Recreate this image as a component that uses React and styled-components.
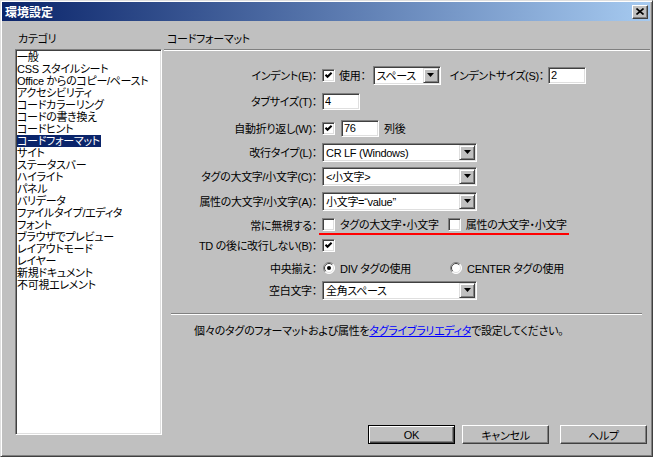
import React from "react";
import styled, { createGlobalStyle } from "styled-components";

const GlobalStyle = createGlobalStyle`
  html, body {
    margin: 0;
    padding: 0;
    background: #c0c0c0;
  }
  body {
    font-family: "Liberation Sans", "Noto Sans CJK JP", sans-serif;
    font-size: 11px;
    letter-spacing: -0.3px;
    font-feature-settings: "palt" 1;
    color: #000;
  }
`;

const categories = [
  "一般",
  "CSS スタイルシート",
  "Office からのコピー/ペースト",
  "アクセシビリティ",
  "コードカラーリング",
  "コードの書き換え",
  "コードヒント",
  "コードフォーマット",
  "サイト",
  "ステータスバー",
  "ハイライト",
  "パネル",
  "バリデータ",
  "ファイルタイプ/エディタ",
  "フォント",
  "ブラウザでプレビュー",
  "レイアウトモード",
  "レイヤー",
  "新規ドキュメント",
  "不可視エレメント",
];

export default function App() {
  return (
    <>
      <GlobalStyle />
      <Window>
        <TitleBar>
          <Title>環境設定</Title>
          <CloseButton>
            <svg width="8" height="7" viewBox="0 0 8 7">
              <path d="M0.5 0.5 L7.5 6.5 M7.5 0.5 L0.5 6.5" stroke="#000" strokeWidth="1.6" />
            </svg>
          </CloseButton>
        </TitleBar>
        <Body>
          <LeftCol>
            <Caption>カテゴリ</Caption>
            <ListBox>
              {categories.map((c) => (
                <ListItem key={c} $selected={c === "コードフォーマット"}>
                  {c}
                </ListItem>
              ))}
            </ListBox>
          </LeftCol>
          <RightCol>
            <Caption>コードフォーマット</Caption>
            <Rule />
            <Form>
              <Row $mt={14}>
                <Label>インデント(E)：</Label>
                <Controls>
                  <Checkbox checked />
                  <Text $ml={4}>使用：</Text>
                  <Select $w={68} $ml={7} value="スペース" />
                  <Text $ml={9}>インデントサイズ(S)：</Text>
                  <Field $w={38} $ml={4} value="2" />
                </Controls>
              </Row>
              <Row $mt={6}>
                <Label>タブサイズ(T)：</Label>
                <Controls>
                  <Field $w={38} value="4" />
                </Controls>
              </Row>
              <Row $mt={7}>
                <Label>自動折り返し(W)：</Label>
                <Controls>
                  <Checkbox checked />
                  <Field $w={38} $ml={6} value="76" />
                  <Text $ml={5}>列後</Text>
                </Controls>
              </Row>
              <Row $mt={4}>
                <Label>改行タイプ(L)：</Label>
                <Controls>
                  <Select $w={155} value="CR LF (Windows)" />
                </Controls>
              </Row>
              <Row $mt={4}>
                <Label>タグの大文字/小文字(C)：</Label>
                <Controls>
                  <Select $w={155} value="<小文字>" />
                </Controls>
              </Row>
              <Row $mt={5}>
                <Label>属性の大文字/小文字(A)：</Label>
                <Controls>
                  <Select $w={155} value={"小文字=\u201Cvalue\u201D"} />
                </Controls>
              </Row>
              <Row $mt={4}>
                <Label>常に無視する：</Label>
                <Controls>
                  <Marked>
                    <Checkbox />
                    <Text $ml={5}>タグの大文字・小文字</Text>
                    <Checkbox $ml={9} />
                    <Text $ml={5}>属性の大文字・小文字</Text>
                  </Marked>
                </Controls>
              </Row>
              <Row $mt={0}>
                <Label>TD の後に改行しない(B)：</Label>
                <Controls>
                  <Checkbox checked />
                </Controls>
              </Row>
              <Row $mt={3}>
                <Label>中央揃え：</Label>
                <Controls>
                  <Option $w={128}>
                    <Radio checked $ml={1} />
                    <Text $ml={5}>DIV タグの使用</Text>
                  </Option>
                  <Option>
                    <Radio />
                    <Text $ml={5}>CENTER タグの使用</Text>
                  </Option>
                </Controls>
              </Row>
              <Row $mt={2}>
                <Label>空白文字：</Label>
                <Controls>
                  <Select $w={155} value="全角スペース" />
                </Controls>
              </Row>
            </Form>
            <Separator />
            <Note>
              個々のタグのフォーマットおよび属性を<Link href="#">タグライブラリエディタ</Link>で設定してください。
            </Note>
            <ButtonRow>
              <Button $default>OK</Button>
              <Button $ml={7}>キャンセル</Button>
              <Button $ml={11}>ヘルプ</Button>
            </ButtonRow>
          </RightCol>
        </Body>
      </Window>
    </>
  );
}

function Checkbox({ checked, $ml }) {
  return (
    <CheckBox $ml={$ml}>
      {checked && (
        <svg width="9" height="9" viewBox="0 0 9 9">
          <path d="M1.5 3.8 L3.5 5.8 L7.6 1.7" fill="none" stroke="#000" strokeWidth="2" />
        </svg>
      )}
    </CheckBox>
  );
}

function Radio({ checked, $ml }) {
  return (
    <RadioBox $ml={$ml}>
      <svg width="12" height="12" viewBox="0 0 12 12">
        <circle cx="6" cy="6" r="5.5" fill="#fff" />
        <path d="M2.1 9.9 A5.5 5.5 0 0 1 9.9 2.1" fill="none" stroke="#808080" />
        <path d="M9.9 2.1 A5.5 5.5 0 0 1 2.1 9.9" fill="none" stroke="#fff" />
        <path d="M2.8 9.2 A4.5 4.5 0 0 1 9.2 2.8" fill="none" stroke="#404040" />
        <path d="M9.2 2.8 A4.5 4.5 0 0 1 2.8 9.2" fill="none" stroke="#dfdfdf" />
        {checked && <circle cx="6" cy="6" r="2" fill="#000" />}
      </svg>
    </RadioBox>
  );
}

function Select({ value, $w, $ml }) {
  return (
    <SelectBox $w={$w} $ml={$ml}>
      <SelectValue>{value}</SelectValue>
      <DropButton>
        <svg width="7" height="4" viewBox="0 0 7 4">
          <polygon points="0,0 7,0 3.5,4" fill="#000" />
        </svg>
      </DropButton>
    </SelectBox>
  );
}

function Field({ value, $w, $ml }) {
  return <FieldInput $w={$w} $ml={$ml} readOnly defaultValue={value} />;
}

const sunken = `
  border: 1px solid;
  border-color: #808080 #fff #fff #808080;
  box-shadow: inset 1px 1px #404040, inset -1px -1px #dfdfdf;
`;

const raised = `
  border: 1px solid;
  border-color: #fff #404040 #404040 #fff;
  box-shadow: inset -1px -1px #808080;
`;

const Window = styled.div`
  height: 457px;
  box-sizing: border-box;
  display: flex;
  flex-direction: column;
  background: #c0c0c0;
  border: 1px solid;
  border-color: #dfdfdf #404040 #404040 #dfdfdf;
  box-shadow: inset 1px 1px #fff, inset -1px -1px #808080;
  padding: 1px 2px 2px 1px;
`;

const TitleBar = styled.div`
  height: 19px;
  display: flex;
  align-items: center;
  justify-content: space-between;
  padding: 0 2px 0 3px;
  background: linear-gradient(to right, #0a246a, #a6caf0);
`;

const Title = styled.span`
  color: #fff;
  font-weight: bold;
  font-size: 12px;
  letter-spacing: 0;
`;

const CloseButton = styled.div`
  width: 16px;
  height: 14px;
  box-sizing: border-box;
  background: #c0c0c0;
  display: flex;
  align-items: center;
  justify-content: center;
  ${raised}
`;

const Body = styled.div`
  flex: 1;
  display: flex;
  padding: 12px 0 10px 13px;
  min-height: 0;
`;

const LeftCol = styled.div`
  width: 147px;
  display: flex;
  flex-direction: column;
`;

const Caption = styled.div`
  height: 12px;
  line-height: 12px;
  margin: 0 0 4px 3px;
  white-space: nowrap;
`;

const ListBox = styled.div`
  flex: 1;
  background: #fff;
  box-sizing: border-box;
  padding: 1px 0 0 1px;
  margin-bottom: 9px;
  ${sunken}
`;

const ListItem = styled.div`
  width: fit-content;
  height: 12px;
  line-height: 12px;
  padding: 0 1px 0 0;
  white-space: nowrap;
  background: ${(p) => (p.$selected ? "#0a246a" : "transparent")};
  color: ${(p) => (p.$selected ? "#fff" : "#000")};
`;

const RightCol = styled.div`
  flex: 1;
  display: flex;
  flex-direction: column;
  margin-left: 2px;
`;

const Rule = styled.div`
  border-top: 1px solid #808080;
  border-bottom: 1px solid #fff;
`;

const Form = styled.div`
  display: flex;
  flex-direction: column;
`;

const Row = styled.div`
  height: 20px;
  display: flex;
  align-items: center;
  margin-top: ${(p) => p.$mt}px;
`;

const Label = styled.div`
  width: 153px;
  text-align: right;
  white-space: nowrap;
  margin-right: 5px;
  flex-shrink: 0;
`;

const Controls = styled.div`
  display: flex;
  align-items: center;
  height: 100%;
`;

const Marked = styled.div`
  display: flex;
  align-items: center;
  height: 100%;
  box-sizing: border-box;
  margin-left: -3px;
  padding: 0 2px 0 3px;
  border-bottom: 2px solid #ff0000;
`;

const Option = styled.div`
  display: flex;
  align-items: center;
  width: ${(p) => (p.$w ? `${p.$w}px` : "auto")};
`;

const Text = styled.span`
  white-space: nowrap;
  margin-left: ${(p) => p.$ml || 0}px;
`;

const CheckBox = styled.div`
  width: 13px;
  height: 13px;
  box-sizing: border-box;
  background: #fff;
  display: flex;
  align-items: center;
  justify-content: center;
  flex-shrink: 0;
  margin-left: ${(p) => p.$ml || 0}px;
  ${sunken}
`;

const RadioBox = styled.div`
  width: 12px;
  height: 12px;
  display: flex;
  flex-shrink: 0;
  margin-left: ${(p) => p.$ml || 0}px;
`;

const SelectBox = styled.div`
  width: ${(p) => p.$w}px;
  height: 19px;
  box-sizing: border-box;
  background: #fff;
  display: flex;
  align-items: stretch;
  padding: 2px;
  margin-left: ${(p) => p.$ml || 0}px;
  ${sunken}
`;

const SelectValue = styled.div`
  flex: 1;
  line-height: 15px;
  padding-left: 1px;
  white-space: nowrap;
  overflow: hidden;
`;

const DropButton = styled.div`
  width: 16px;
  box-sizing: border-box;
  margin: -1px -1px -1px 0;
  background: #c0c0c0;
  display: flex;
  align-items: center;
  justify-content: center;
  border: 1px solid;
  border-color: #dfdfdf #404040 #404040 #dfdfdf;
  box-shadow: inset 1px 1px #fff, inset -1px -1px #808080;
`;

const FieldInput = styled.input`
  width: ${(p) => p.$w}px;
  height: 17px;
  box-sizing: border-box;
  margin: 0 0 0 ${(p) => p.$ml || 0}px;
  padding: 0 0 0 2px;
  background: #fff;
  font: inherit;
  letter-spacing: inherit;
  outline: none;
  ${sunken}
`;

const Separator = styled.div`
  margin: 13px 8px 0 7px;
  border-top: 1px solid #808080;
  border-bottom: 1px solid #fff;
`;

const Note = styled.div`
  margin-top: 10px;
  padding-left: 30px;
  line-height: 12px;
  white-space: nowrap;
`;

const Link = styled.a`
  color: #0000ff;
  text-decoration: underline;
`;

const ButtonRow = styled.div`
  margin-top: auto;
  display: flex;
  justify-content: flex-end;
  padding-right: 3px;
`;

const Button = styled.div`
  width: 87px;
  height: 19px;
  box-sizing: border-box;
  display: flex;
  align-items: center;
  justify-content: center;
  background: #c0c0c0;
  margin-left: ${(p) => p.$ml || 0}px;
  ${(p) =>
    p.$default
      ? `border: 1px solid #000; box-shadow: inset 1px 1px #fff, inset -1px -1px #404040, inset -2px -2px #808080;`
      : raised}
`;
